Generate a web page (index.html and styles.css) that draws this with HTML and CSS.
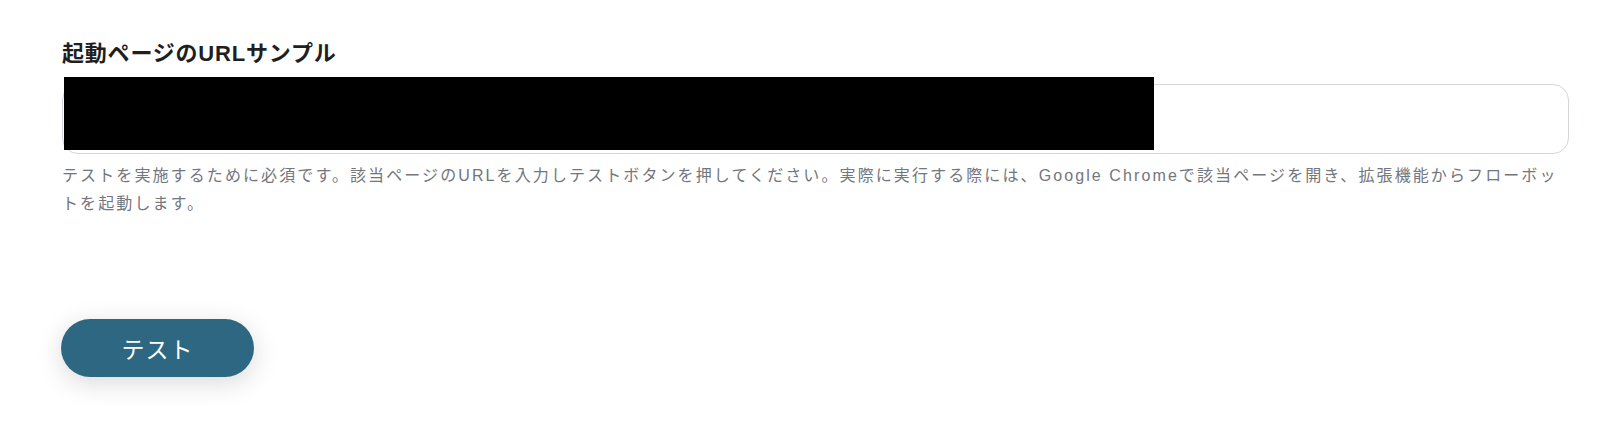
FILE: index.html
```html
<!DOCTYPE html>
<html lang="ja">

<head>
    <meta charset="UTF-8">
    <meta name="viewport" content="width=device-width, initial-scale=1.0">
    <link rel="stylesheet" href="styles.css">
    <title>起動ページのURLサンプル</title>
</head>

<body>
    <div class="form">
        <label class="label" for="url">起動ページのURLサンプル</label>
        <div class="field">
            <input id="url" class="input" type="text">
            <div class="redact"></div>
        </div>
        <p class="help">テストを実施するために必須です。該当ページのURLを入力しテストボタンを押してください。実際に実行する際には、Google Chromeで該当ページを開き、拡張機能からフローボットを起動します。</p>
        <div class="actions">
            <button class="btn">テスト</button>
        </div>
    </div>
</body>

</html>
```

FILE: styles.css
```css
:root {
    --font: "Liberation Sans", "Noto Sans CJK JP", sans-serif;
    --text: #1f1f1f;
    --muted: #72767d;
    --border: #d3d6dc;
    --accent: #2d6781;
}

body {
    margin: 0;
    background-color: #fff;
    font-family: var(--font);
    color: var(--text);
}

.form {
    padding: 40px 31px 40px 62px;
}

.label {
    display: block;
    font-size: 22px;
    line-height: 28px;
    letter-spacing: 0.8px;
    font-weight: bold;
}

.field {
    position: relative;
    margin-top: 16px;
}

.input {
    display: block;
    width: 100%;
    box-sizing: border-box;
    height: 70px;
    border: 1px solid var(--border);
    border-radius: 16px;
    font-family: var(--font);
    font-size: 16px;
    padding: 0 16px;
}

.redact {
    position: absolute;
    left: 2px;
    top: -7px;
    width: 1090px;
    height: 73px;
    background-color: #000;
}

.help {
    margin: 8px 0 0;
    font-size: 16px;
    line-height: 28px;
    letter-spacing: 2.1px;
    color: var(--muted);
}

.actions {
    margin-top: 101px;
}

.btn {
    width: 193px;
    height: 58px;
    border: none;
    border-radius: 29px;
    background-color: var(--accent);
    color: #fff;
    font-family: var(--font);
    font-size: 23px;
    letter-spacing: 1px;
    box-shadow: 0 6px 26px rgba(0, 0, 0, 0.15);
    margin-left: -1px;
}
```
